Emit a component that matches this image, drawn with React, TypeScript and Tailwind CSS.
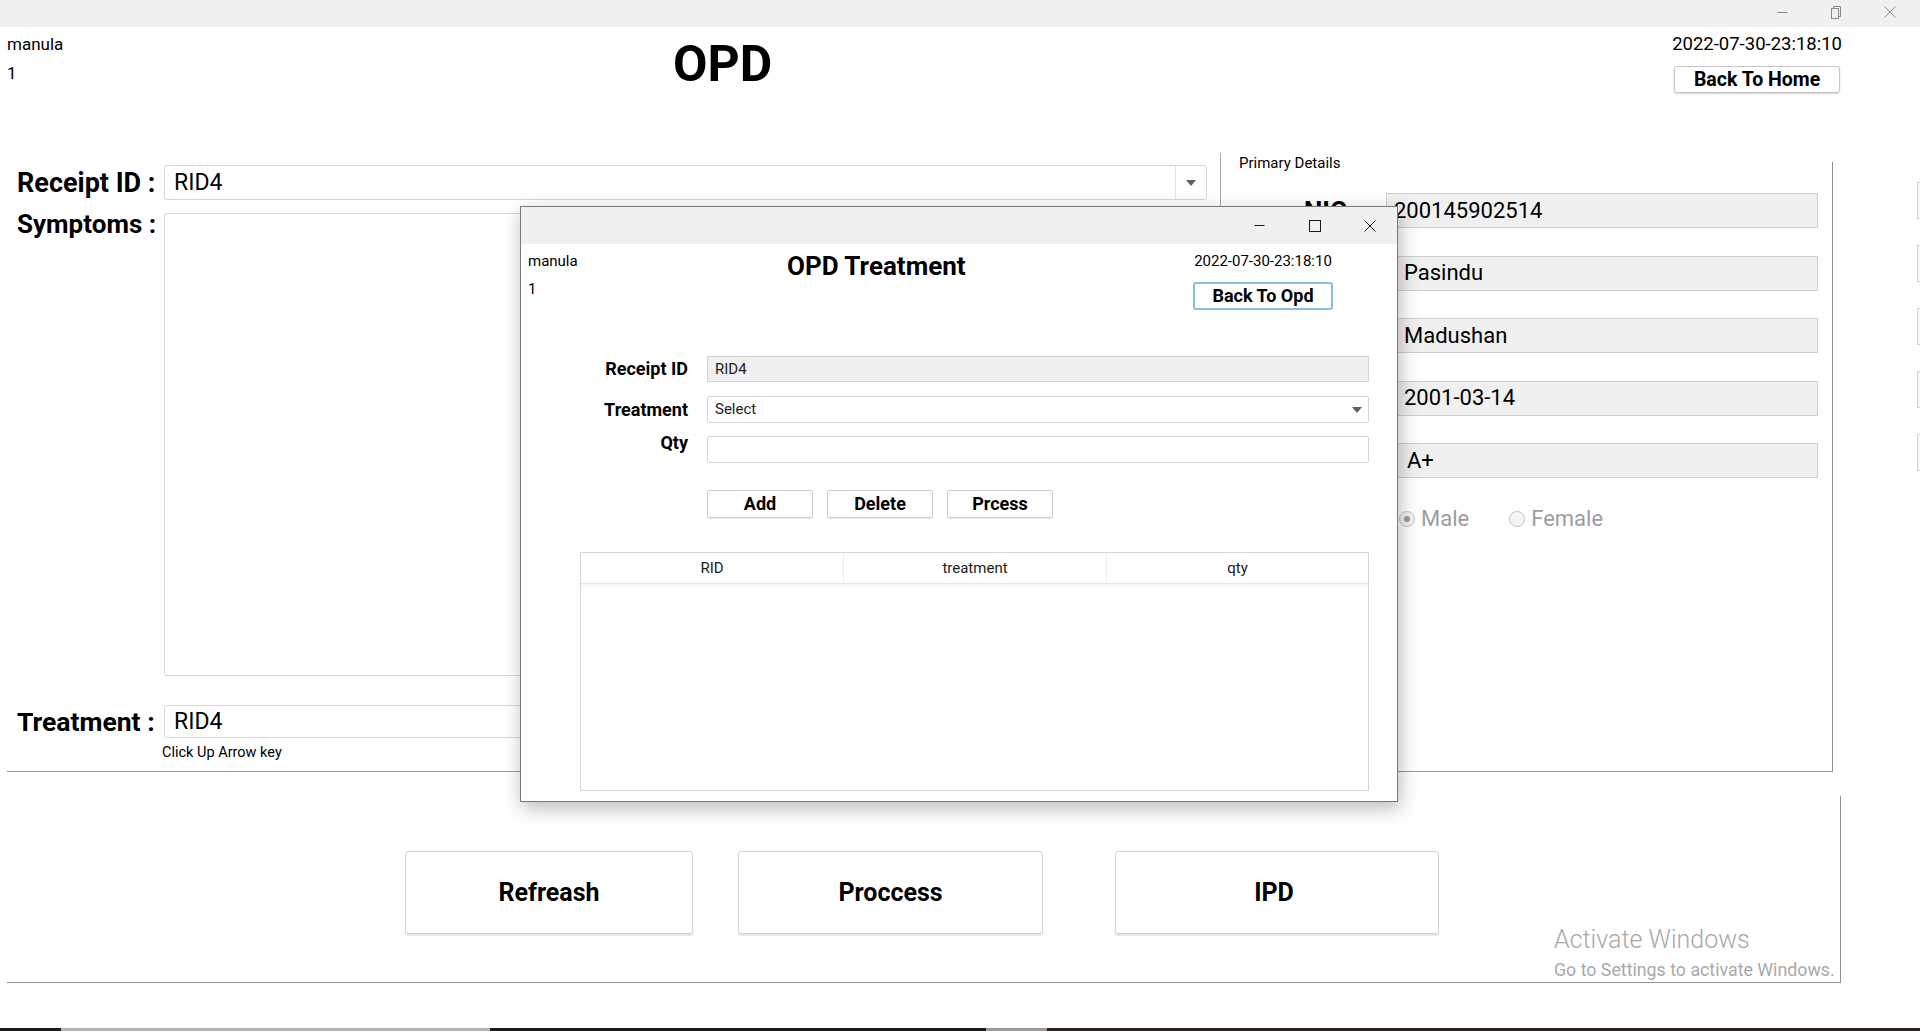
import React from "react";

function MinIcon({ color }: { color: string }) {
  return (
    <svg width="11" height="11" viewBox="0 0 11 11">
      <line x1="0.5" y1="5.5" x2="10.5" y2="5.5" stroke={color} strokeWidth="1" />
    </svg>
  );
}
function RestoreIcon({ color }: { color: string }) {
  return (
    <svg width="11" height="13" viewBox="0 0 11 13">
      <rect x="0.5" y="2.5" width="7" height="10" fill="none" stroke={color} strokeWidth="1" />
      <path d="M2.5 2.5 V0.5 H9.5 V10.5 H7.5" fill="none" stroke={color} strokeWidth="1" />
    </svg>
  );
}
function MaxIcon({ color }: { color: string }) {
  return (
    <svg width="12" height="12" viewBox="0 0 12 12">
      <rect x="0.5" y="0.5" width="11" height="11" fill="none" stroke={color} strokeWidth="1" />
    </svg>
  );
}
function CloseIcon({ color }: { color: string }) {
  return (
    <svg width="12" height="12" viewBox="0 0 12 12">
      <path d="M0.5 0.5 L11.5 11.5 M11.5 0.5 L0.5 11.5" stroke={color} strokeWidth="1" fill="none" />
    </svg>
  );
}
function Arrow() {
  return (
    <svg width="10" height="6" viewBox="0 0 10 6">
      <path d="M0 0 H10 L5 6 Z" fill="#606060" />
    </svg>
  );
}

function Radio({ checked }: { checked: boolean }) {
  return (
    <div className="w-[16px] h-[16px] rounded-full border border-[#c4c4c4] bg-[#f4f4f4] flex items-center justify-center">
      {checked && <div className="w-[6px] h-[6px] rounded-full bg-[#9a9a9a]" />}
    </div>
  );
}

function InfoField({ value, pl, label }: { value: string; pl: string; label?: string }) {
  return (
    <div className="flex items-center h-[35px]">
      <div className="w-[165px] h-full flex items-center pl-[83px]">
        {label && <span className="text-[26px] font-bold leading-[30px]">{label}</span>}
      </div>
      <div className={`w-[432px] h-full bg-[#f0f0f0] border border-[#cfcfcf] flex items-center text-[22px] leading-[26px] text-black ${pl}`}>
        {value}
      </div>
    </div>
  );
}

function Dialog() {
  return (
    <div className="absolute left-[520px] top-[206px] w-[878px] h-[596px] border border-[#7a7a7a] bg-white shadow-[2px_6px_18px_rgba(0,0,0,0.28)] flex flex-col">
      <div className="h-[37px] bg-[#f0f0f0] flex justify-end shrink-0">
        <div className="w-[55px] h-full flex items-center justify-center"><MinIcon color="#1a1a1a" /></div>
        <div className="w-[55px] h-full flex items-center justify-center"><MaxIcon color="#1a1a1a" /></div>
        <div className="w-[55px] h-full flex items-center justify-center"><CloseIcon color="#1a1a1a" /></div>
      </div>
      <div className="flex h-[96px]">
        <div className="w-[266px] pl-[7px] pt-[8px] text-[15px] leading-[18px]">
          <div>manula</div>
          <div className="mt-[10px]">1</div>
        </div>
        <div className="pt-[7px] text-[26px] leading-[30px] font-bold">OPD Treatment</div>
        <div className="flex-1" />
        <div className="flex flex-col items-center pr-[64px] pt-[8px]">
          <div className="text-[15px] leading-[18px]">2022-07-30-23:18:10</div>
          <div className="mt-[12px] w-[140px] h-[28px] rounded-[3px] border-2 border-[#8cbbe8] bg-white flex items-center justify-center text-[18px] font-bold leading-[22px]">
            Back To Opd
          </div>
        </div>
      </div>
      <div className="mt-[16px] flex flex-col">
        <div className="flex items-center h-[26px]">
          <div className="w-[167px] text-right text-[18px] font-bold leading-[22px]">Receipt ID</div>
          <div className="ml-[19px] w-[662px] h-full bg-[#f0f0f0] border border-[#d4d4d4] flex items-center pl-[7px] text-[15px] text-[#222]">RID4</div>
        </div>
        <div className="flex items-center h-[27px] mt-[14px]">
          <div className="w-[167px] text-right text-[18px] font-bold leading-[22px]">Treatment</div>
          <div className="ml-[19px] w-[662px] h-full bg-white border border-[#d4d4d4] rounded-[2px] flex items-center justify-between pl-[7px] pr-[6px] text-[15px] text-[#222]">
            <span>Select</span>
            <Arrow />
          </div>
        </div>
        <div className="flex items-start h-[27px] mt-[13px]">
          <div className="w-[167px] text-right text-[18px] font-bold leading-[22px] -mt-[4px]">Qty</div>
          <div className="ml-[19px] w-[662px] h-full bg-white border border-[#d4d4d4] rounded-[2px]" />
        </div>
        <div className="flex mt-[27px] pl-[186px] gap-[14px]">
          {["Add", "Delete", "Prcess"].map((t) => (
            <div key={t} className="w-[106px] h-[28px] border border-[#cdcdcd] rounded-[2px] bg-white flex items-center justify-center text-[18px] font-bold leading-[22px] shadow-[0_1px_0_rgba(0,0,0,0.08)]">
              {t}
            </div>
          ))}
        </div>
        <div className="mt-[34px] ml-[59px] w-[789px] h-[239px] border border-[#d6d6d6] flex flex-col">
          <div className="flex h-[31px] border-b border-[#e6e6e6] shadow-[0_3px_2px_rgba(0,0,0,0.03)]">
            <div className="w-[263px] border-r border-[#ececec] flex items-center justify-center text-[15px] text-[#222]">RID</div>
            <div className="w-[263px] border-r border-[#ececec] flex items-center justify-center text-[15px] text-[#222]">treatment</div>
            <div className="flex-1 flex items-center justify-center text-[15px] text-[#222]">qty</div>
          </div>
        </div>
      </div>
    </div>
  );
}

export default function App() {
  return (
    <div className="relative w-[1920px] h-[1031px] bg-white overflow-hidden flex flex-col font-['Roboto','Liberation_Sans',sans-serif] text-black">
      {/* main title bar */}
      <div className="h-[27px] bg-[#f0f0f0] flex justify-end pr-[3px] shrink-0">
        <div className="w-[54px] h-[24px] flex items-center justify-center"><MinIcon color="#8a8a8a" /></div>
        <div className="w-[54px] h-[24px] flex items-center justify-center"><RestoreIcon color="#8a8a8a" /></div>
        <div className="w-[54px] h-[24px] flex items-center justify-center"><CloseIcon color="#8a8a8a" /></div>
      </div>

      {/* header */}
      <div className="flex h-[98px] shrink-0">
        <div className="w-[673px] pl-[7px] pt-[7px] text-[17px] leading-[20px]">
          <div>manula</div>
          <div className="mt-[9px]">1</div>
        </div>
        <div className="pt-[12px] text-[50px] font-bold leading-[50px]">OPD</div>
        <div className="flex-1" />
        <div className="flex flex-col items-center pr-[78px] pt-[7px]">
          <div className="text-[18.5px] leading-[20px]">2022-07-30-23:18:10</div>
          <div className="mt-[12px] w-[166px] h-[27px] rounded-[3px] border border-[#c6c6c6] bg-white shadow-[0_1px_2px_rgba(0,0,0,0.18)] flex items-center justify-center text-[19.5px] font-bold leading-[22px]">
            Back To Home
          </div>
        </div>
      </div>

      {/* main area */}
      <div className="flex h-[646px] shrink-0">
        {/* left panel */}
        <div className="w-[1220px] flex flex-col pt-[40px]">
          <div className="flex items-center h-[35px]">
            <div className="w-[164px] pl-[17px] text-[27px] font-bold leading-[32px]">Receipt ID :</div>
            <div className="w-[1043px] h-full border border-[#d6d6d6] rounded-[3px] bg-white flex">
              <div className="flex-1 flex items-center pl-[9px] text-[23px] leading-[28px]">RID4</div>
              <div className="w-[31px] h-full border-l border-[#e2e2e2] flex items-center justify-center">
                <Arrow />
              </div>
            </div>
          </div>
          <div className="flex items-start mt-[13px]">
            <div className="w-[164px] pl-[17px] text-[26px] font-bold leading-[22px]">Symptoms :</div>
            <div className="w-[1043px] h-[463px] border border-[#d6d6d6] rounded-[2px] bg-white" />
          </div>
          <div className="flex items-center h-[33px] mt-[29px]">
            <div className="w-[164px] pl-[17px] text-[26.5px] font-bold leading-[32px]">Treatment :</div>
            <div className="w-[1043px] h-full border border-[#d6d6d6] rounded-[3px] bg-white flex items-center pl-[9px] text-[23px] leading-[28px]">RID4</div>
          </div>
          <div className="pl-[162px] mt-[6px] text-[14.5px] leading-[17px]">Click Up Arrow key</div>
        </div>
        {/* separator */}
        <div className="w-px bg-[#a8a8a8] mt-[28px]" />
        {/* right panel */}
        <div className="w-[611px] flex flex-col pt-[29px]">
          <div className="pl-[18px] text-[15px] leading-[18px]">Primary Details</div>
          <div className="mt-[21px] flex flex-col gap-[27.5px]">
            <InfoField value="200145902514" pl="pl-[7px]" label="NIC" />
            <InfoField value="Pasindu" pl="pl-[17px]" />
            <InfoField value="Madushan" pl="pl-[17px]" />
            <InfoField value="2001-03-14" pl="pl-[17px]" />
            <InfoField value="A+" pl="pl-[20px]" />
          </div>
          <div className="mt-[28px] flex items-center h-[26px] text-[22px] leading-[26px] text-[#9d9d9d]">
            <div className="ml-[178px]"><Radio checked /></div>
            <span className="ml-[6px]">Male</span>
            <div className="ml-[40px]"><Radio checked={false} /></div>
            <span className="ml-[6px]">Female</span>
          </div>
        </div>
        <div className="w-px bg-[#8f8f8f] mt-[37px]" />
        {/* partial boxes at far right edge */}
        <div className="flex-1 flex flex-col items-end pt-[57px] gap-[26px]">
          {[0, 1, 2, 3, 4].map((i) => (
            <div key={i} className="w-[3px] h-[37px] border-l border-t border-b border-[#d4d4d4] bg-[#f7f7f7]" />
          ))}
        </div>
      </div>

      {/* horizontal line */}
      <div className="ml-[7px] w-[1826px] h-px bg-[#9a9a9a] shrink-0" />

      {/* bottom area */}
      <div className="flex h-[210px] shrink-0">
        <div className="w-[1840px] flex pt-[79px] pl-[405px]">
          <div className="w-[288px] h-[83px] border border-[#d2d2d2] rounded-[3px] bg-white shadow-[0_2px_1px_rgba(0,0,0,0.1)] flex items-center justify-center text-[25px] font-bold leading-[30px]">Refreash</div>
          <div className="ml-[45px] w-[305px] h-[83px] border border-[#d2d2d2] rounded-[3px] bg-white shadow-[0_2px_1px_rgba(0,0,0,0.1)] flex items-center justify-center text-[25px] font-bold leading-[30px]">Proccess</div>
          <div className="ml-[72px] w-[324px] h-[83px] border border-[#d2d2d2] rounded-[3px] bg-white shadow-[0_2px_1px_rgba(0,0,0,0.1)] flex items-center justify-center text-[25px] font-bold leading-[30px] pr-[6px]">IPD</div>
        </div>
        <div className="w-px bg-[#8f8f8f] mt-[24px]" />
      </div>
      <div className="ml-[7px] w-[1834px] h-px bg-[#8f8f8f] shrink-0" />

      <div className="flex-1" />
      {/* taskbar edge */}
      <div className="h-[3px] flex shrink-0">
        <div className="w-[61px] bg-[#1c1c1c]" />
        <div className="w-[429px] bg-[#b4b4b4]" />
        <div className="w-[496px] bg-[#1c1c1c]" />
        <div className="w-[61px] bg-[#9a9a9a]" />
        <div className="flex-1 bg-[#2a2420]" />
      </div>

      {/* Windows watermark */}
      <div className="absolute left-[1554px] top-[925px] text-[#a9a9a9]">
        <div className="text-[25px] leading-[30px] font-light">Activate Windows</div>
        <div className="text-[17.8px] leading-[20px] mt-[5px]">Go to Settings to activate Windows.</div>
      </div>

      <Dialog />
    </div>
  );
}
